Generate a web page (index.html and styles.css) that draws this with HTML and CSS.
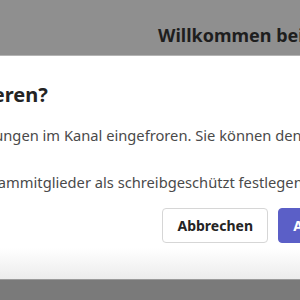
FILE: index.html
```html
<!DOCTYPE html>
<html lang="de">
<head>
    <meta charset="UTF-8">
    <meta name="viewport" content="width=device-width, initial-scale=1.0">
    <title>Kanal einfrieren</title>
    <link rel="stylesheet" href="styles.css">
</head>
<body>
    <div class="screen">
        <!-- App header behind the overlay -->
        <header class="app-header">
            <h1 class="app-title">Willkommen bei Microsoft Teams</h1>
        </header>

        <!-- Dialog -->
        <div class="dialog">
            <h2 class="dialog-title">Diesen Kanal einfrieren?</h2>
            <p class="dialog-text">Damit werden alle Unterhaltungen im Kanal eingefroren. Sie können den Kanal jederzeit wieder freigeben.</p>
            <p class="dialog-option">Sie können außerdem alle Teammitglieder als schreibgeschützt festlegen.</p>
            <div class="dialog-actions">
                <button class="btn">Abbrechen</button>
                <button class="btn btn-primary">Anwenden</button>
            </div>
        </div>

        <div class="app-footer"></div>
    </div>
</body>
</html>
```

FILE: styles.css
```css
body {
    margin: 0;
    font-family: "Noto Sans", "Open Sans", sans-serif;
    background-color: #7a7a7a;
}
.screen {
    width: 300px;
    height: 300px;
    overflow: hidden;
    display: flex;
    flex-direction: column;
}
.app-header {
    height: 56px;
    flex-shrink: 0;
    background-color: #8f8f8f;
    border-bottom: 1px solid #b4b4b4;
    box-sizing: border-box;
    padding: 24px 0 0 158px;
}
.app-title {
    margin: 0;
    font-size: 18px;
    line-height: 22px;
    font-weight: bold;
    color: #1e1e1e;
    white-space: nowrap;
}
.dialog {
    height: 223px;
    flex-shrink: 0;
    width: 632px;
    margin-left: -225px;
    padding: 0 24px;
    box-sizing: border-box;
    background: linear-gradient(to bottom, #fff 0, #fff 192px, #ececec 223px);
}
.dialog-title {
    margin: 0;
    padding: 26px 0 0 6px;
    font-size: 20px;
    line-height: 26px;
    font-weight: bold;
    color: #242424;
    white-space: nowrap;
}
.dialog-text {
    margin: 17px 0 0;
    font-size: 14.7px;
    line-height: 20px;
    color: #4a4a4a;
    white-space: nowrap;
}
.dialog-option {
    margin: 27px 0 0;
    font-size: 14.7px;
    line-height: 20px;
    color: #4a4a4a;
    white-space: nowrap;
}
.dialog-actions {
    display: flex;
    justify-content: flex-end;
    gap: 10px;
    margin-top: 16px;
}
.btn {
    height: 35px;
    min-width: 105px;
    padding: 0 14px;
    font-family: inherit;
    font-size: 14px;
    font-weight: bold;
    color: #242424;
    background: #fff;
    border: 1px solid #d6d6d6;
    border-radius: 4px;
}
.btn-primary {
    background-color: #5b5fc7;
    border-color: #5b5fc7;
    color: #fff;
}
.app-footer {
    flex: 1;
    background-color: #7a7a7a;
    border-top: 1px solid #9a9a9a;
}
```
